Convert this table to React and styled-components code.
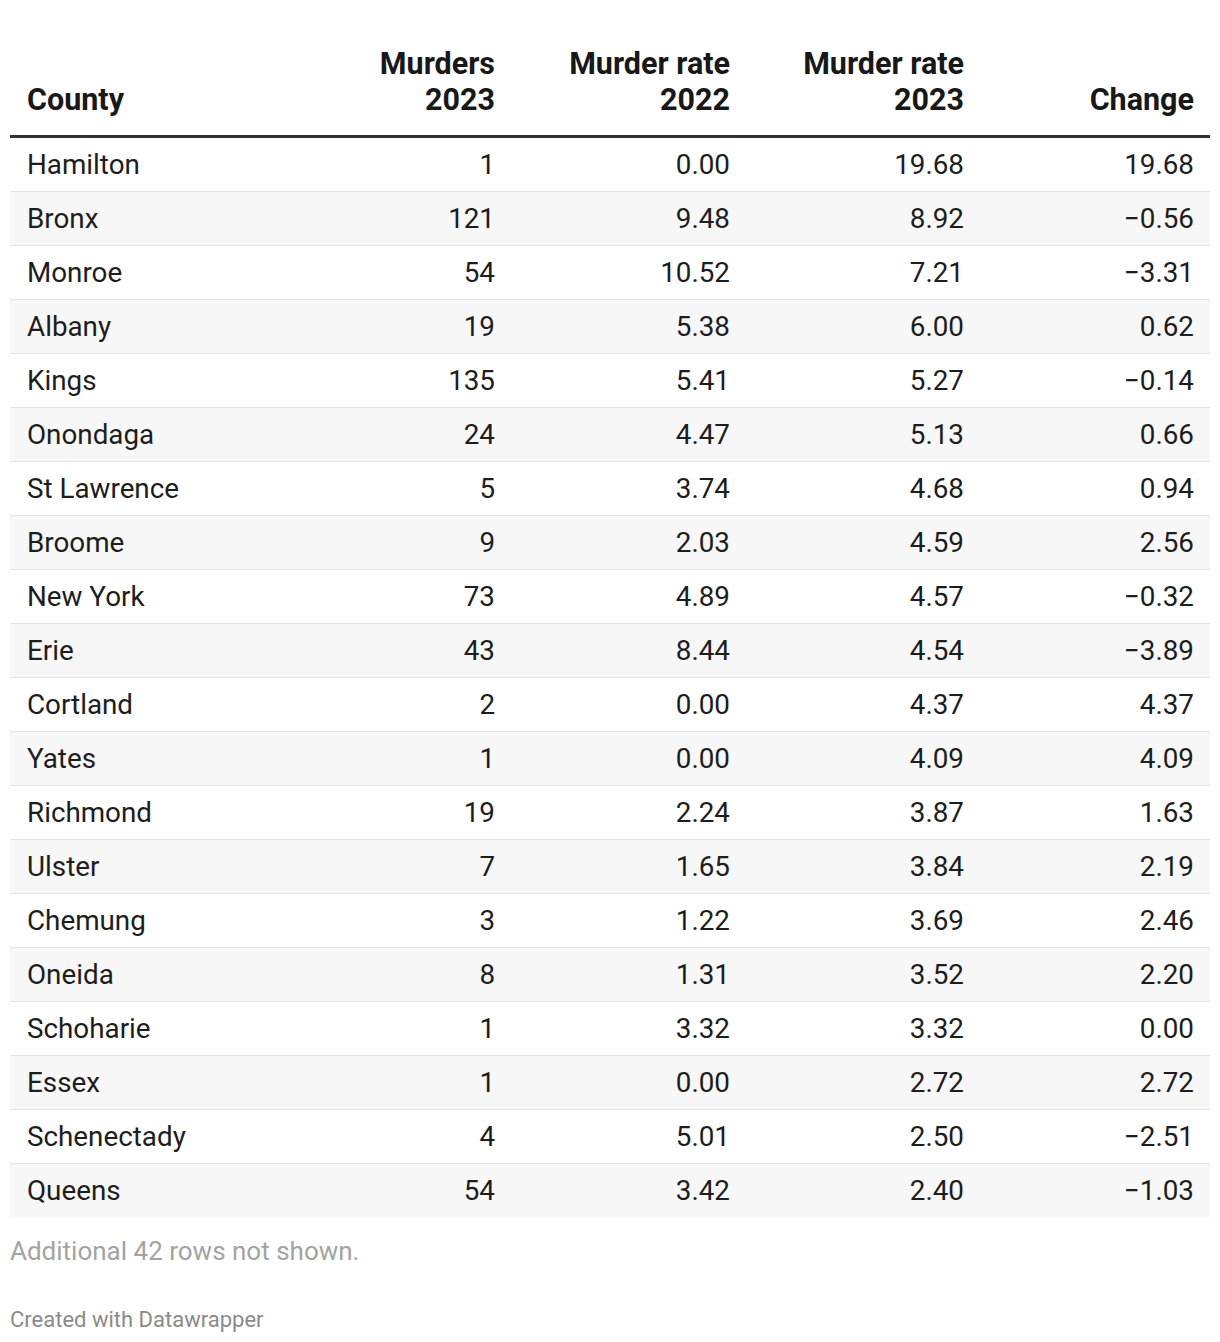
import React from "react";
import styled, { createGlobalStyle } from "styled-components";

const GlobalStyle = createGlobalStyle`
  body {
    margin: 0;
    background: #ffffff;
    font-family: Roboto, "Liberation Sans", sans-serif;
    color: #1d1d1d;
  }
`;

const Wrapper = styled.div`
  padding: 46px 10px 10px 10px;
`;

const Table = styled.table`
  width: 1200px;
  border-collapse: collapse;
  table-layout: fixed;
`;

const Head = styled.th`
  box-sizing: border-box;
  width: ${(p) => p.$w}px;
  padding: 0 16px 17px 17px;
  text-align: ${(p) => (p.$left ? "left" : "right")};
  vertical-align: bottom;
  font-size: 30.5px;
  line-height: 36px;
  font-weight: 700;
  color: #181818;
  border-bottom: 3px solid #333333;
`;

const Row = styled.tr`
  background: ${(p) => (p.$odd ? "#f7f7f7" : "#ffffff")};
  border-bottom: ${(p) => (p.$last ? "none" : "1px solid #e3e3e3")};
`;

const Cell = styled.td`
  height: 53px;
  padding: 0 16px 0 17px;
  text-align: ${(p) => (p.$left ? "left" : "right")};
  font-size: 27.8px;
  line-height: 53px;
  color: #1d1d1d;
  white-space: nowrap;
`;

const Notes = styled.div`
  margin-top: 19px;
  font-size: 26px;
  line-height: 30px;
  color: #a3a3a3;
`;

const Credit = styled.div`
  margin-top: 41px;
  font-size: 22px;
  line-height: 26px;
  color: #8a8a8a;
`;

const rows = [
  ["Hamilton", "1", "0.00", "19.68", "19.68"],
  ["Bronx", "121", "9.48", "8.92", "−0.56"],
  ["Monroe", "54", "10.52", "7.21", "−3.31"],
  ["Albany", "19", "5.38", "6.00", "0.62"],
  ["Kings", "135", "5.41", "5.27", "−0.14"],
  ["Onondaga", "24", "4.47", "5.13", "0.66"],
  ["St Lawrence", "5", "3.74", "4.68", "0.94"],
  ["Broome", "9", "2.03", "4.59", "2.56"],
  ["New York", "73", "4.89", "4.57", "−0.32"],
  ["Erie", "43", "8.44", "4.54", "−3.89"],
  ["Cortland", "2", "0.00", "4.37", "4.37"],
  ["Yates", "1", "0.00", "4.09", "4.09"],
  ["Richmond", "19", "2.24", "3.87", "1.63"],
  ["Ulster", "7", "1.65", "3.84", "2.19"],
  ["Chemung", "3", "1.22", "3.69", "2.46"],
  ["Oneida", "8", "1.31", "3.52", "2.20"],
  ["Schoharie", "1", "3.32", "3.32", "0.00"],
  ["Essex", "1", "0.00", "2.72", "2.72"],
  ["Schenectady", "4", "5.01", "2.50", "−2.51"],
  ["Queens", "54", "3.42", "2.40", "−1.03"],
];

const columns = [
  { label: "County", w: 266, left: true },
  { label: ["Murders", "2023"], w: 235 },
  { label: ["Murder rate", "2022"], w: 235 },
  { label: ["Murder rate", "2023"], w: 234 },
  { label: "Change", w: 230 },
];

export default function App() {
  return (
    <Wrapper>
      <GlobalStyle />
      <Table>
        <thead>
          <tr>
            {columns.map((c, i) => (
              <Head key={i} $w={c.w} $left={c.left}>
                {Array.isArray(c.label) ? (
                  <>
                    {c.label[0]}
                    <br />
                    {c.label[1]}
                  </>
                ) : (
                  c.label
                )}
              </Head>
            ))}
          </tr>
        </thead>
        <tbody>
          {rows.map((r, i) => (
            <Row key={r[0]} $odd={i % 2 === 1} $last={i === rows.length - 1}>
              {r.map((v, j) => (
                <Cell key={j} $left={j === 0}>
                  {v}
                </Cell>
              ))}
            </Row>
          ))}
        </tbody>
      </Table>
      <Notes>Additional 42 rows not shown.</Notes>
      <Credit>Created with Datawrapper</Credit>
    </Wrapper>
  );
}
